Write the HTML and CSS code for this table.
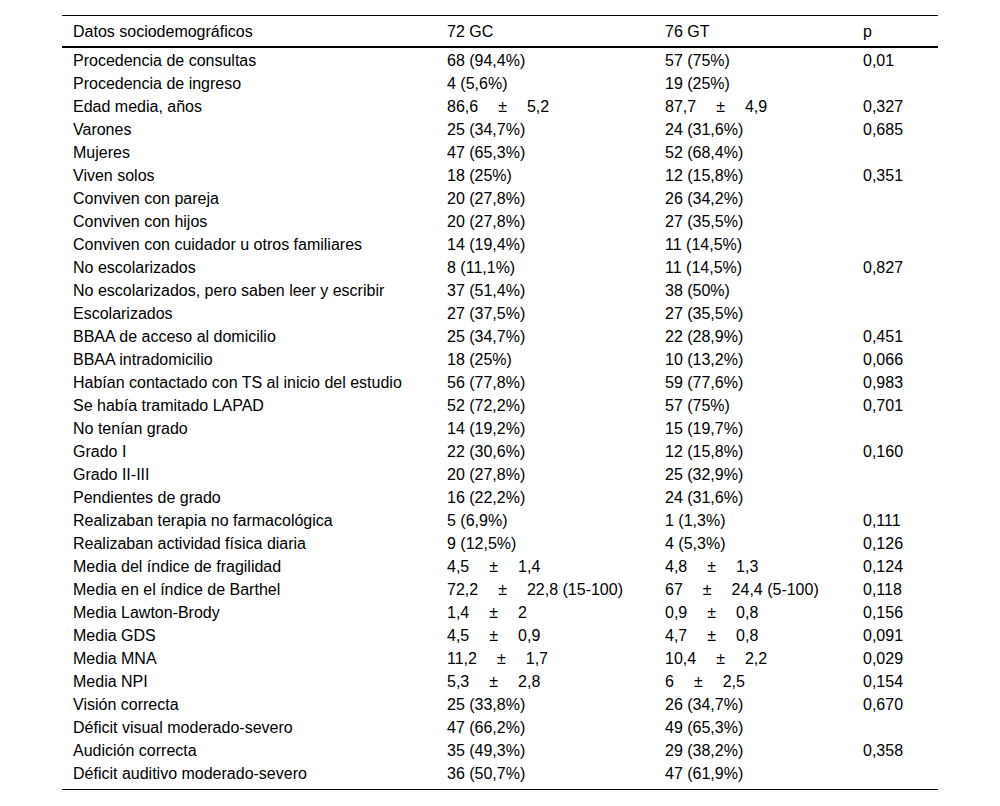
FILE: index.html
```html
<!DOCTYPE html>
<html lang="es">
<head>
<meta charset="utf-8">
<title>Datos sociodemográficos</title>
<link rel="stylesheet" href="styles.css">
</head>
<body>
<div class="wrap">
<table class="data">
<colgroup>
<col class="c1"><col class="c2"><col class="c3"><col class="c4">
</colgroup>
<thead>
<tr><th>Datos sociodemográficos</th><th>72 GC</th><th>76 GT</th><th>p</th></tr>
</thead>
<tbody>
<tr><td>Procedencia de consultas</td><td>68 (94,4%)</td><td>57 (75%)</td><td>0,01</td></tr>
<tr><td>Procedencia de ingreso</td><td>4 (5,6%)</td><td>19 (25%)</td><td></td></tr>
<tr><td>Edad media, años</td><td>86,6<span class="pm">±</span>5,2</td><td>87,7<span class="pm">±</span>4,9</td><td>0,327</td></tr>
<tr><td>Varones</td><td>25 (34,7%)</td><td>24 (31,6%)</td><td>0,685</td></tr>
<tr><td>Mujeres</td><td>47 (65,3%)</td><td>52 (68,4%)</td><td></td></tr>
<tr><td>Viven solos</td><td>18 (25%)</td><td>12 (15,8%)</td><td>0,351</td></tr>
<tr><td>Conviven con pareja</td><td>20 (27,8%)</td><td>26 (34,2%)</td><td></td></tr>
<tr><td>Conviven con hijos</td><td>20 (27,8%)</td><td>27 (35,5%)</td><td></td></tr>
<tr><td>Conviven con cuidador u otros familiares</td><td>14 (19,4%)</td><td>11 (14,5%)</td><td></td></tr>
<tr><td>No escolarizados</td><td>8 (11,1%)</td><td>11 (14,5%)</td><td>0,827</td></tr>
<tr><td>No escolarizados, pero saben leer y escribir</td><td>37 (51,4%)</td><td>38 (50%)</td><td></td></tr>
<tr><td>Escolarizados</td><td>27 (37,5%)</td><td>27 (35,5%)</td><td></td></tr>
<tr><td>BBAA de acceso al domicilio</td><td>25 (34,7%)</td><td>22 (28,9%)</td><td>0,451</td></tr>
<tr><td>BBAA intradomicilio</td><td>18 (25%)</td><td>10 (13,2%)</td><td>0,066</td></tr>
<tr><td>Habían contactado con TS al inicio del estudio</td><td>56 (77,8%)</td><td>59 (77,6%)</td><td>0,983</td></tr>
<tr><td>Se había tramitado LAPAD</td><td>52 (72,2%)</td><td>57 (75%)</td><td>0,701</td></tr>
<tr><td>No tenían grado</td><td>14 (19,2%)</td><td>15 (19,7%)</td><td></td></tr>
<tr><td>Grado I</td><td>22 (30,6%)</td><td>12 (15,8%)</td><td>0,160</td></tr>
<tr><td>Grado II-III</td><td>20 (27,8%)</td><td>25 (32,9%)</td><td></td></tr>
<tr><td>Pendientes de grado</td><td>16 (22,2%)</td><td>24 (31,6%)</td><td></td></tr>
<tr><td>Realizaban terapia no farmacológica</td><td>5 (6,9%)</td><td>1 (1,3%)</td><td>0,111</td></tr>
<tr><td>Realizaban actividad física diaria</td><td>9 (12,5%)</td><td>4 (5,3%)</td><td>0,126</td></tr>
<tr><td>Media del índice de fragilidad</td><td>4,5<span class="pm">±</span>1,4</td><td>4,8<span class="pm">±</span>1,3</td><td>0,124</td></tr>
<tr><td>Media en el índice de Barthel</td><td>72,2<span class="pm">±</span>22,8 (15-100)</td><td>67<span class="pm">±</span>24,4 (5-100)</td><td>0,118</td></tr>
<tr><td>Media Lawton-Brody</td><td>1,4<span class="pm">±</span>2</td><td>0,9<span class="pm">±</span>0,8</td><td>0,156</td></tr>
<tr><td>Media GDS</td><td>4,5<span class="pm">±</span>0,9</td><td>4,7<span class="pm">±</span>0,8</td><td>0,091</td></tr>
<tr><td>Media MNA</td><td>11,2<span class="pm">±</span>1,7</td><td>10,4<span class="pm">±</span>2,2</td><td>0,029</td></tr>
<tr><td>Media NPI</td><td>5,3<span class="pm">±</span>2,8</td><td>6<span class="pm">±</span>2,5</td><td>0,154</td></tr>
<tr><td>Visión correcta</td><td>25 (33,8%)</td><td>26 (34,7%)</td><td>0,670</td></tr>
<tr><td>Déficit visual moderado-severo</td><td>47 (66,2%)</td><td>49 (65,3%)</td><td></td></tr>
<tr><td>Audición correcta</td><td>35 (49,3%)</td><td>29 (38,2%)</td><td>0,358</td></tr>
<tr class="last"><td>Déficit auditivo moderado-severo</td><td>36 (50,7%)</td><td>47 (61,9%)</td><td></td></tr>
</tbody>
</table>
</div>
</body>
</html>
```

FILE: styles.css
```css
html, body {
  margin: 0;
  padding: 0;
  background: #ffffff;
}

.wrap {
  padding: 15px 62px 0 62px;
}

.data {
  width: 876px;
  border-collapse: collapse;
  table-layout: fixed;
  font-family: "Liberation Sans", Arial, sans-serif;
  font-size: 16px;
  line-height: 19px;
  color: #000000;
  border-top: 1px solid #000000;
  border-bottom: 1px solid #000000;
}

.c1 { width: 374px; }
.c2 { width: 218px; }
.c3 { width: 198px; }
.c4 { width: 86px; }

.data th {
  font-weight: normal;
  text-align: left;
  padding: 6px 11px 5px 11px;
  border-bottom: 2px solid #000000;
  white-space: nowrap;
}

.data td {
  text-align: left;
  padding: 3px 11px 1px 11px;
  white-space: nowrap;
  height: 19px;
}

.data tr.last td {
  padding-bottom: 6px;
}

.pm {
  margin: 0 20px;
}
```
